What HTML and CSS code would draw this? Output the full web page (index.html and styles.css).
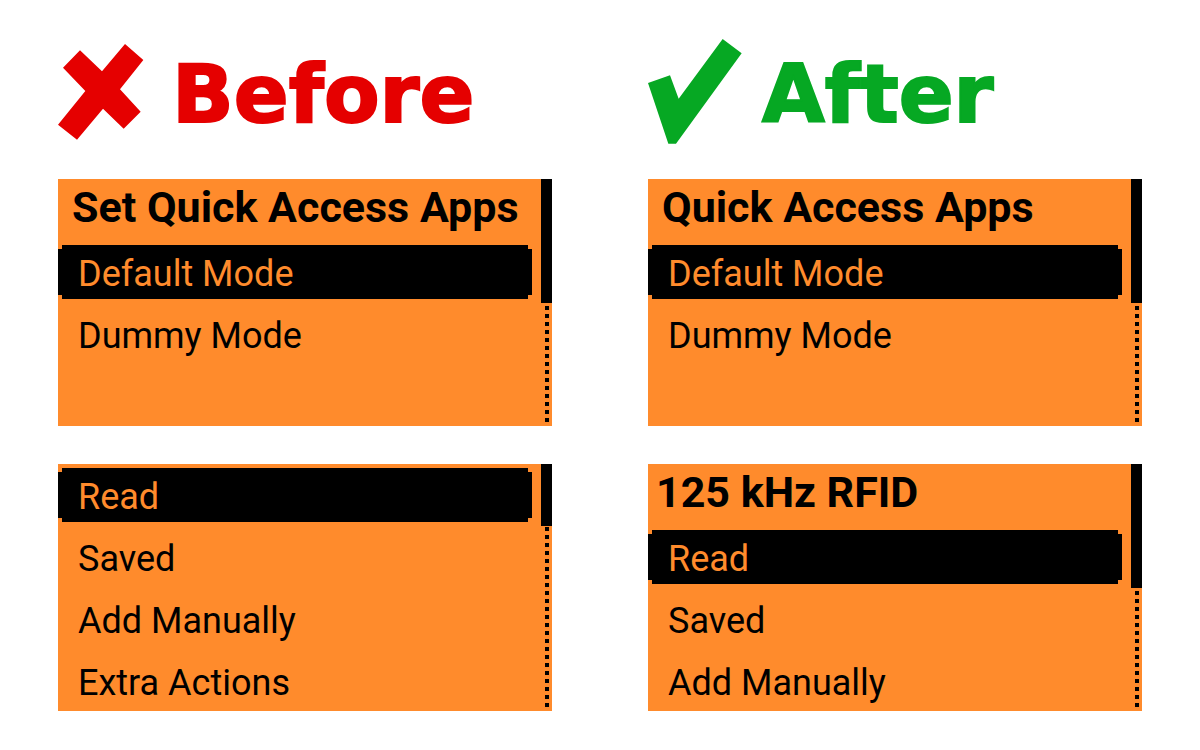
FILE: index.html
```html
<!DOCTYPE html>
<html lang="en">
<head>
<meta charset="utf-8">
<meta name="viewport" content="width=device-width, initial-scale=1">
<title>Before and After</title>
<link rel="stylesheet" href="styles.css">
</head>
<body>
<main class="compare">
  <section class="column">
    <h1 class="verdict verdict-before">
      <svg class="mark" width="86" height="96" viewBox="54 71 258 288" aria-hidden="true"><path fill="currentColor" d="M120 90 186 153 255 71 310 119 240 207 302 274 251 325 189 265 111 358 54 313 136 212 69 142Z"/></svg>
      <span class="word">Before</span>
    </h1>
    <div class="screen">
      <div class="content">
        <h2 class="title">Set Quick Access Apps</h2>
        <div class="menu">
          <button class="item selected" type="button">Default Mode</button>
          <button class="item" type="button">Dummy Mode</button>
        </div>
      </div>
      <div class="scrollbar"><div class="thumb half"></div></div>
    </div>
    <div class="screen">
      <div class="content untitled">
        <div class="menu">
          <button class="item selected" type="button">Read</button>
          <button class="item" type="button">Saved</button>
          <button class="item" type="button">Add Manually</button>
          <button class="item" type="button">Extra Actions</button>
        </div>
      </div>
      <div class="scrollbar"><div class="thumb quarter"></div></div>
    </div>
  </section>
  <section class="column">
    <h1 class="verdict verdict-after">
      <svg class="mark" width="94" height="105" viewBox="57 58 282 315" aria-hidden="true"><path fill="currentColor" d="M57 190 123 167 149 237 281 58 338 101 141 372H118Z"/></svg>
      <span class="word">After</span>
    </h1>
    <div class="screen">
      <div class="content">
        <h2 class="title">Quick Access Apps</h2>
        <div class="menu">
          <button class="item selected" type="button">Default Mode</button>
          <button class="item" type="button">Dummy Mode</button>
        </div>
      </div>
      <div class="scrollbar"><div class="thumb half"></div></div>
    </div>
    <div class="screen">
      <div class="content">
        <h2 class="title title-wide">125 kHz RFID</h2>
        <div class="menu">
          <button class="item selected" type="button">Read</button>
          <button class="item" type="button">Saved</button>
          <button class="item" type="button">Add Manually</button>
        </div>
      </div>
      <div class="scrollbar"><div class="thumb half"></div></div>
    </div>
  </section>
</main>
</body>
</html>
```

FILE: styles.css
```css
* { box-sizing: border-box; }

body {
  margin: 0;
  background: #fff;
  color: #000;
  font-family: Roboto, "Liberation Sans", sans-serif;
}

.compare {
  display: grid;
  grid-template-columns: 1fr 1fr;
  gap: 96px;
  padding: 39px 58px;
}

.column {
  display: flex;
  flex-direction: column;
  gap: 38px;
  min-width: 0;
}

.verdict {
  display: flex;
  align-items: center;
  min-height: 105px;
  margin: 0 0 -3px;
  font-family: "DejaVu Sans", sans-serif;
  font-size: 81px;
  font-weight: 700;
  line-height: 96px;
  -webkit-text-stroke: 2px currentColor;
}

.verdict-before { gap: 28px; color: #e50000; }
.verdict-after { gap: 20px; color: #06a823; }

.mark { flex: none; }
.word { padding-top: 4px; }

.screen {
  display: grid;
  grid-template-columns: 1fr 11px;
  gap: 9px;
  min-height: 247px;
  background: #ff8b2c;
}

.title {
  margin: 0;
  padding: 0 0 10px 14px;
  font-size: 43px;
  font-weight: 700;
  line-height: 56px;
  white-space: nowrap;
}

.title-wide { padding-left: 8px; }

.untitled { padding-top: 4px; }

.menu {
  display: grid;
  gap: 8px;
}

.item {
  padding: 4px 20px 0;
  border: 0;
  background: none;
  color: #000;
  font: 400 36px/50px Roboto, "Liberation Sans", sans-serif;
  text-align: left;
}

.selected {
  background: #000;
  color: #ff8b2c;
  clip-path: polygon(4px 0, calc(100% - 4px) 0, calc(100% - 4px) 4px, 100% 4px, 100% calc(100% - 4px), calc(100% - 4px) calc(100% - 4px), calc(100% - 4px) 100%, 4px 100%, 4px calc(100% - 4px), 0 calc(100% - 4px), 0 4px, 4px 4px);
}

.scrollbar {
  background: repeating-linear-gradient(to top, transparent 0 4px, #000 4px 8px) center / 4px 100% no-repeat;
}

.thumb { background: #000; }
.half { height: 50%; }
.quarter { height: 25%; }
```
